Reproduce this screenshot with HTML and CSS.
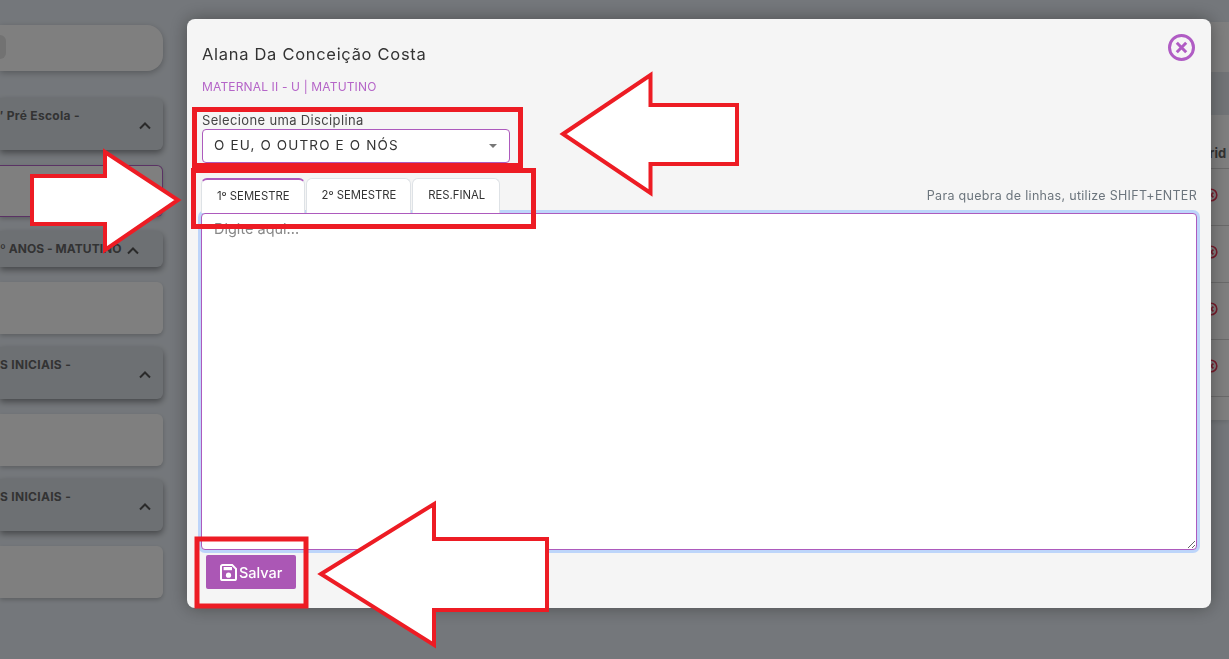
FILE: index.html
```html
<!DOCTYPE html>
<html lang="en">
<head>
    <meta charset="UTF-8">
    <meta name="viewport" content="width=device-width, initial-scale=1.0">
    <title>Pareceres</title>
    <link rel="stylesheet" href="styles.css">
</head>
<body>
    <div class="page">
        <div class="sidebar">
            <div class="search-card"><span class="search-pill"></span></div>

            <div class="group">
                <div class="group-head">
                    <span class="group-title">′ Pré Escola -</span>
                    <svg class="chevron" viewBox="0 0 12 8"><path d="M1 6.5 6 1.5l5 5"/></svg>
                </div>
                <div class="class-card active"></div>
            </div>

            <div class="group">
                <div class="group-head short">
                    <span class="group-title">º ANOS - MATUTINO</span>
                    <svg class="chevron" viewBox="0 0 12 8"><path d="M1 6.5 6 1.5l5 5"/></svg>
                </div>
                <div class="class-card"></div>
            </div>

            <div class="group">
                <div class="group-head">
                    <span class="group-title">S INICIAIS -</span>
                    <svg class="chevron" viewBox="0 0 12 8"><path d="M1 6.5 6 1.5l5 5"/></svg>
                </div>
                <div class="class-card"></div>
            </div>

            <div class="group">
                <div class="group-head">
                    <span class="group-title">S INICIAIS -</span>
                    <svg class="chevron" viewBox="0 0 12 8"><path d="M1 6.5 6 1.5l5 5"/></svg>
                </div>
                <div class="class-card"></div>
            </div>
        </div>

        <div class="panel">
            <div class="panel-band"></div>
            <div class="panel-row head"><span class="col-label">rid</span></div>
            <div class="panel-row"><svg class="row-icon" viewBox="0 0 14 14"><circle cx="7" cy="7" r="5.8"/><path d="M4.6 4.6l4.8 4.8M9.4 4.6 4.6 9.4"/></svg></div>
            <div class="panel-row"><svg class="row-icon" viewBox="0 0 14 14"><circle cx="7" cy="7" r="5.8"/><path d="M4.6 4.6l4.8 4.8M9.4 4.6 4.6 9.4"/></svg></div>
            <div class="panel-row"><svg class="row-icon" viewBox="0 0 14 14"><circle cx="7" cy="7" r="5.8"/><path d="M4.6 4.6l4.8 4.8M9.4 4.6 4.6 9.4"/></svg></div>
            <div class="panel-row"><svg class="row-icon" viewBox="0 0 14 14"><circle cx="7" cy="7" r="5.8"/><path d="M4.6 4.6l4.8 4.8M9.4 4.6 4.6 9.4"/></svg></div>
        </div>
    </div>

    <div class="overlay">
        <div class="modal">
            <div class="modal-head">
                <div class="student-name">Alana Da Conceição Costa</div>
                <svg class="close-icon" viewBox="0 0 27 27"><circle cx="13.5" cy="13.5" r="12"/><path d="M8.8 8.800l9.400 9.400M18.200 8.800l-9.400 9.400"/></svg>
            </div>
            <div class="student-class">MATERNAL II - U | MATUTINO</div>

            <label class="field-label" for="disciplina">Selecione uma Disciplina</label>
            <div class="select-wrap">
                <select id="disciplina" class="select">
                    <option>O EU, O OUTRO E O NÓS</option>
                </select>
            </div>

            <div class="tabs-row">
                <div class="tabs">
                    <div class="tab active">1º SEMESTRE</div>
                    <div class="tab">2º SEMESTRE</div>
                    <div class="tab">RES.FINAL</div>
                </div>
                <div class="hint">Para quebra de linhas, utilize SHIFT+ENTER</div>
            </div>

            <textarea class="notes" placeholder="Digite aqui..."></textarea>

            <button class="save-btn">
                <svg class="save-icon" viewBox="0 0 17 17">
                    <path class="save-outline" d="M2.6 1h9.6L16 4.800v9.600a1.600 1.600 0 0 1-1.600 1.600H2.600A1.600 1.600 0 0 1 1 14.400V2.600A1.600 1.600 0 0 1 2.600 1z"/>
                    <rect x="3.600" y="3" width="8.400" height="3.200"/>
                    <circle cx="8.500" cy="11.200" r="2.600"/>
                </svg>
                Salvar
            </button>
        </div>
    </div>

    <svg class="marks" viewBox="0 0 1229 659">
        <rect x="194.5" y="109.5" width="326" height="56"/>
        <rect x="193.5" y="170.5" width="340" height="56"/>
        <rect x="197" y="539" width="109" height="67"/>
        <path d="M563 134 650.500 75v30H737v59h-86.500v29z"/>
        <path d="M32 176h73v-24l73 48-73 50v-26H32z"/>
        <path d="M321 574 434 504v35H547v71H434v35z"/>
    </svg>
</body>
</html>
```

FILE: styles.css
```css
* {
    box-sizing: border-box;
}

body {
    margin: 0;
    height: 659px;
    overflow: hidden;
    font-family: Inter, "Open Sans", sans-serif;
    background-color: #e9eff6;
    color: #333;
}

.page {
    display: flex;
    align-items: flex-start;
    gap: 30px;
}

/* left column, its left side is cut off by the window */
.sidebar {
    width: 163px;
    flex-shrink: 0;
    padding-top: 25px;
}

.search-card {
    height: 46px;
    background: #fff;
    border-radius: 0 16px 16px 0;
    box-shadow: 0 2px 6px rgba(0,0,0,0.25);
    padding-top: 10px;
    margin-bottom: 27px;
}

.search-pill {
    display: block;
    width: 6px;
    height: 24px;
    border-radius: 0 12px 12px 0;
    background: #e4e4e4;
}

.group {
    margin-bottom: 13px;
}

.group-head {
    position: relative;
    height: 52px;
    background: #dbe1e7;
    border-radius: 0 6px 6px 0;
    box-shadow: 0 3px 6px rgba(0,0,0,0.4);
    padding-top: 10px;
    margin-bottom: 15px;
}

.group-head.short {
    height: 36px;
}

.group-title {
    display: block;
    font-size: 12px;
    font-weight: 700;
    line-height: 15px;
    letter-spacing: 0.3px;
    white-space: nowrap;
    color: #666;
}

.group-head.short .group-title {
    letter-spacing: 0.05px;
}

.chevron {
    position: absolute;
    right: 12px;
    top: 24px;
    width: 12px;
    height: 8px;
    fill: none;
    stroke: #555;
    stroke-width: 2;
}

.group-head.short .chevron {
    right: 24px;
    top: 16px;
}

.class-card {
    height: 52px;
    background: #fff;
    border-radius: 0 6px 6px 0;
    box-shadow: 0 2px 4px rgba(0,0,0,0.2);
}

.class-card.active {
    border: 1px solid #b565c8;
    border-left: none;
    margin-bottom: 14px;
}

/* table behind the modal, only its right edge shows */
.panel {
    flex: 1;
    min-width: 0;
    margin-top: 22px;
    padding-top: 50px;
    padding-bottom: 23px;
    background: #fff;
    box-shadow: 0 2px 4px rgba(0,0,0,0.1);
}

.panel-band {
    height: 43px;
    background: #e4e9ef;
}

.panel-row {
    display: flex;
    align-items: center;
    height: 57px;
    padding-left: 1011px;
    padding-bottom: 4px;
    border-bottom: 1px solid #d5d5d5;
}

.panel-row.head {
    height: 54px;
    padding-left: 1016px;
    padding-top: 22px;
    padding-bottom: 0;
}

.col-label {
    font-size: 13px;
    font-weight: 700;
    color: #666;
}

.row-icon {
    width: 14px;
    height: 14px;
    fill: none;
    stroke: #f03a5a;
    stroke-width: 1.600;
}

/* modal */
.overlay {
    position: fixed;
    inset: 0;
    background: rgba(0,0,0,0.5);
    padding: 19px 18px 0 187px;
}

.modal {
    height: 589px;
    background: #f5f5f5;
    border-radius: 8px;
    box-shadow: 0 0 18px rgba(0,0,0,0.35);
    padding: 0 14px;
}

.modal-head {
    display: flex;
    justify-content: space-between;
    align-items: flex-start;
    padding: 15px 2px 0 1px;
    height: 52px;
}

.student-name {
    font-size: 16.5px;
    line-height: 40px;
    color: #333;
    letter-spacing: 0.7px;
}

.close-icon {
    width: 27px;
    height: 27px;
    fill: none;
    stroke: #b05cc4;
    stroke-width: 3;
}

.student-class {
    font-size: 12px;
    line-height: 18px;
    letter-spacing: 0.15px;
    color: #b565c8;
    padding-left: 1px;
    margin-top: 7px;
}

.field-label {
    display: block;
    font-size: 13px;
    line-height: 16px;
    letter-spacing: 0.35px;
    color: #444;
    padding-left: 1px;
    margin-top: 16px;
}

.select-wrap {
    position: relative;
    width: 308px;
    height: 34px;
    margin-left: 1px;
    margin-top: 1px;
}

.select-wrap::after {
    content: '';
    position: absolute;
    right: 13px;
    top: 15px;
    border-left: 4px solid transparent;
    border-right: 4px solid transparent;
    border-top: 4px solid #777;
}

.select {
    appearance: none;
    width: 100%;
    height: 100%;
    padding: 0 11px 2px;
    background: #fff;
    border: 1px solid #ad5abd;
    border-radius: 4px;
    font-family: inherit;
    font-size: 13.5px;
    letter-spacing: 1.15px;
    color: #333;
}

.tabs-row {
    display: flex;
    justify-content: space-between;
    align-items: flex-end;
    margin-top: 15px;
    position: relative;
    z-index: 1;
}

.tabs {
    display: flex;
    gap: 1px;
}

.tab {
    height: 35px;
    padding: 0 14px 3px 15px;
    display: flex;
    align-items: center;
    font-size: 11.3px;
    color: #333;
    background: #fff;
    border: 1px solid #dee2e6;
    border-bottom: none;
    border-radius: 6px 6px 0 0;
}

.tab.active {
    border-top: 2px solid #ad5abd;
    padding-top: 2px;
}

.hint {
    font-size: 12.5px;
    letter-spacing: 0.3px;
    color: #6c757d;
    line-height: 34px;
}

.notes {
    display: block;
    width: 996px;
    height: 337px;
    padding: 6px 12px;
    background: #fff;
    border: 1px solid #ad5abd;
    border-radius: 4px;
    box-shadow: 0 0 0 3px #bdd5fa;
    font-family: inherit;
    font-size: 14.5px;
    outline: none;
}

.notes::placeholder {
    color: #888;
}

.save-btn {
    display: flex;
    align-items: center;
    gap: 2px;
    width: 90px;
    height: 34px;
    margin: 5px 0 0 5px;
    padding: 0 0 0 14px;
    border: none;
    border-radius: 2px;
    background: #ab57b5;
    color: #fff;
    font-family: inherit;
    font-size: 14.5px;
    font-weight: 500;
}

.save-icon {
    width: 17px;
    height: 17px;
    flex-shrink: 0;
    fill: #fff;
}

.save-outline {
    fill: none;
    stroke: #fff;
    stroke-width: 2;
}

/* red boxes and arrows drawn on top of the screenshot */
.marks {
    position: fixed;
    inset: 0;
    width: 1229px;
    height: 659px;
    pointer-events: none;
}

.marks rect {
    fill: none;
    stroke: #ed1c24;
    stroke-width: 5;
}

.marks path {
    fill: #fff;
    stroke: #ed1c24;
    stroke-width: 4;
}
```
